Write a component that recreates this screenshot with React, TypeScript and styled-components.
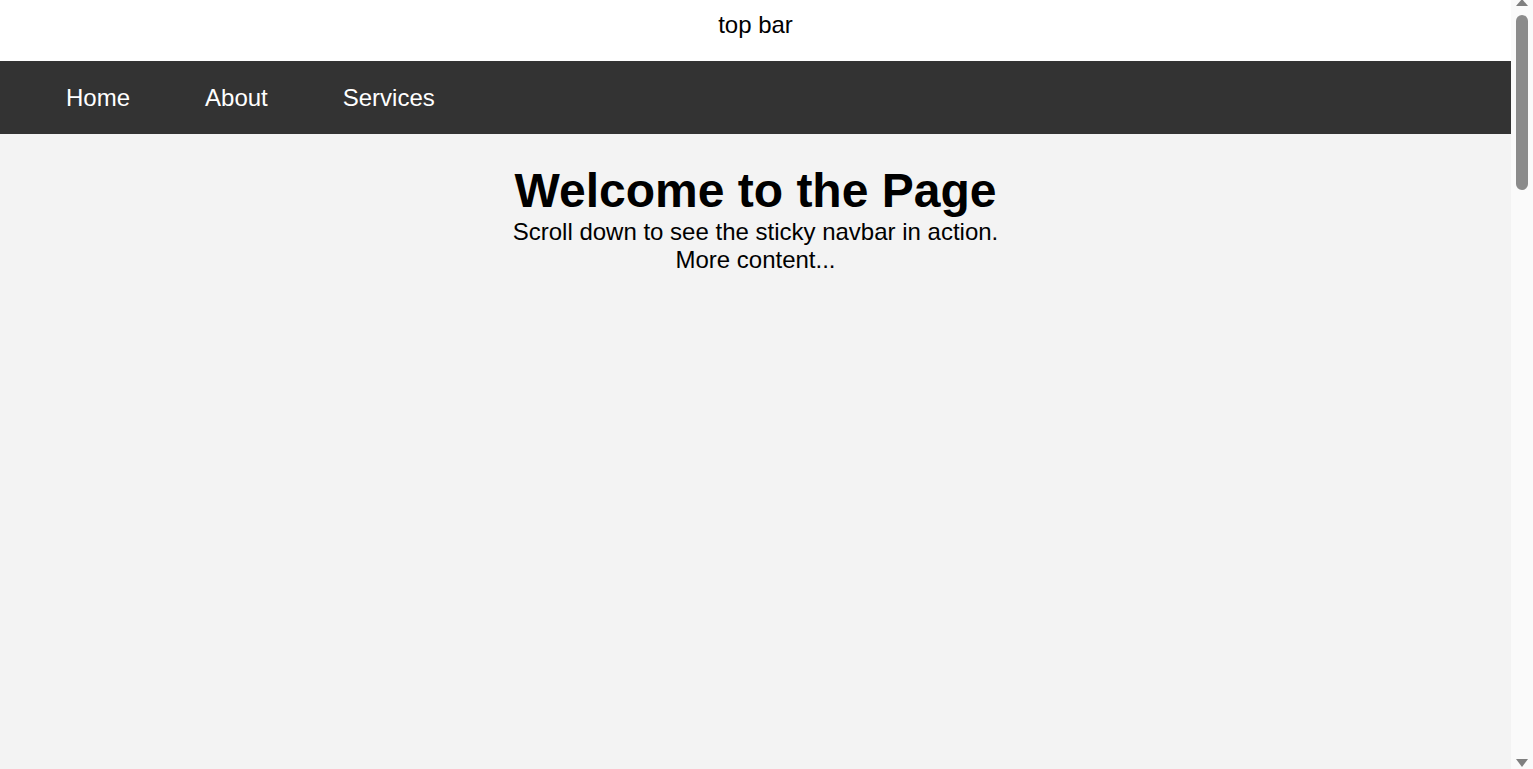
import React from "react";
import styled, { createGlobalStyle } from "styled-components";

const Global = createGlobalStyle`
  html, body { margin: 0; padding: 0; height: 100%; overflow: hidden; }
  body {
    font-family: "Liberation Sans", Arial, sans-serif;
    background: #f3f3f3;
    color: #000;
  }
  #root { height: 100%; }
`;

const Shell = styled.div`
  display: flex;
  height: 100vh;
`;

const Viewport = styled.div`
  flex: 1;
  min-width: 0;
  overflow-y: auto;
  scrollbar-width: none;
  &::-webkit-scrollbar { display: none; }
`;

const ScrollTrack = styled.div`
  width: 22px;
  flex: none;
  background: #fafafa;
  display: flex;
  flex-direction: column;
  align-items: center;
`;

const ArrowBox = styled.div<{ $end?: boolean }>`
  height: 15px;
  width: 100%;
  display: flex;
  justify-content: center;
  align-items: flex-start;
  margin-top: ${(p) => (p.$end ? "auto" : "0")};
  padding-top: ${(p) => (p.$end ? "5px" : "0")};
  box-sizing: border-box;
`;

const Thumb = styled.div`
  width: 12px;
  height: 175px;
  border-radius: 6px;
  background: #8b8b8b;
`;

const TopBar = styled.header`
  height: 61px;
  box-sizing: border-box;
  padding-top: 11px;
  background: #fff;
  text-align: center;
  font-size: 24px;
  line-height: 28px;
`;

const NavBar = styled.nav`
  position: sticky;
  top: 0;
  height: 73px;
  background: #333;
  display: flex;
  align-items: center;
  padding-left: 66px;
  gap: 75px;
`;

const NavLink = styled.a`
  color: #fff;
  text-decoration: none;
  font-size: 24px;
`;

const Main = styled.main`
  min-height: 3113px;
  box-sizing: border-box;
  display: flex;
  flex-direction: column;
  align-items: center;
  padding-top: 29px;
  text-align: center;
`;

const Title = styled.h1`
  margin: 0;
  font-size: 48px;
  font-weight: 700;
  line-height: 55px;
`;

const Text = styled.p`
  margin: 0;
  font-size: 24px;
  line-height: 28px;
`;

export default function App() {
  return (
    <>
      <Global />
      <Shell>
        <Viewport>
          <TopBar>top bar</TopBar>
          <NavBar>
            <NavLink href="#">Home</NavLink>
            <NavLink href="#">About</NavLink>
            <NavLink href="#">Services</NavLink>
          </NavBar>
          <Main>
            <Title>Welcome to the Page</Title>
            <Text>Scroll down to see the sticky navbar in action.</Text>
            <Text>More content...</Text>
          </Main>
        </Viewport>
        <ScrollTrack>
          <ArrowBox>
            <svg width="12" height="6" viewBox="0 0 12 6">
              <path d="M6 -1 L12 6 L0 6 Z" fill="#7f7f7f" />
            </svg>
          </ArrowBox>
          <Thumb />
          <ArrowBox $end>
            <svg width="12" height="8" viewBox="0 0 12 8">
              <path d="M0 0 L12 0 L6 8 Z" fill="#7f7f7f" />
            </svg>
          </ArrowBox>
        </ScrollTrack>
      </Shell>
    </>
  );
}
